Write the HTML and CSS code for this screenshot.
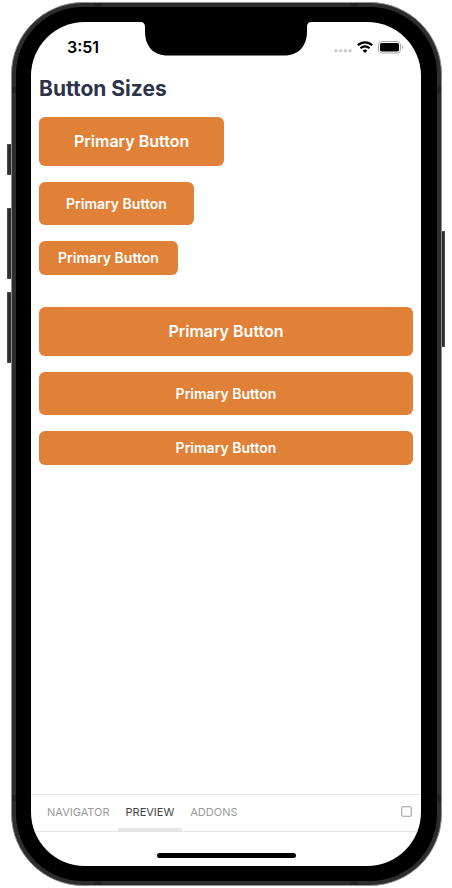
FILE: index.html
```html
<!DOCTYPE html>
<html lang="en">
<head>
  <meta charset="utf-8">
  <meta name="viewport" content="width=device-width, initial-scale=1">
  <title>Button Sizes</title>
  <link rel="stylesheet" href="styles.css">
</head>
<body>
  <div class="phone">
    <span class="side-key side-key-mute"></span>
    <span class="side-key side-key-up"></span>
    <span class="side-key side-key-down"></span>
    <span class="side-key side-key-power"></span>
    <div class="frame">
      <span class="band band-top-left"></span>
      <span class="band band-top-right"></span>
      <span class="band band-bottom-left"></span>
      <span class="band band-bottom-right"></span>
      <span class="band band-left-top"></span>
      <span class="band band-left-bottom"></span>
      <span class="band band-right-top"></span>
      <span class="band band-right-bottom"></span>
      <div class="bezel">
        <div class="screen">
          <header class="status-bar">
            <time class="clock">3:51</time>
            <svg class="notch" width="172" height="34" viewBox="0 0 172 34" aria-hidden="true">
              <path d="M0 0H172C168.500 0 167 1.500 167 5V9C167 24 159 33.500 144 33.500H28C13 33.500 5 24 5 9V5C5 1.500 3.500 0 0 0Z"/>
            </svg>
            <div class="indicators">
              <svg class="signal" width="18" height="12" viewBox="0 0 18 12" aria-hidden="true">
                <circle cx="2" cy="9.800" r="1.700"/><circle cx="6.700" cy="9.800" r="1.700"/><circle cx="11.400" cy="9.800" r="1.700"/><circle cx="16.100" cy="9.800" r="1.700"/>
              </svg>
              <svg class="wifi" width="16" height="12" viewBox="0 0 16 12" aria-hidden="true">
                <path class="arc" d="M.9 4.300A10.200 10.200 0 0 1 15.100 4.300M3.500 7.200A6.400 6.400 0 0 1 12.500 7.200"/>
                <path d="M8 11.900L5.600 9.500A3.600 3.600 0 0 1 10.400 9.500Z"/>
              </svg>
              <svg class="battery" width="26" height="13" viewBox="0 0 26 13" aria-hidden="true">
                <rect class="shell" x=".5" y=".5" width="22" height="11.500" rx="3.300"/>
                <rect x="2" y="2" width="19" height="8.500" rx="1.700"/>
                <path class="cap" d="M24 4.300C25.700 5 25.700 7.500 24 8.200Z"/>
              </svg>
            </div>
          </header>
          <main class="content">
            <h1 class="title">Button Sizes</h1>
            <div class="stack">
              <button class="button button-large" type="button">Primary Button</button>
              <button class="button button-medium" type="button">Primary Button</button>
              <button class="button button-small" type="button">Primary Button</button>
            </div>
            <div class="stack stack-block">
              <button class="button button-large" type="button">Primary Button</button>
              <button class="button button-medium" type="button">Primary Button</button>
              <button class="button button-small" type="button">Primary Button</button>
            </div>
          </main>
          <nav class="tabs" aria-label="Storybook">
            <button class="tab" type="button">NAVIGATOR</button>
            <button class="tab tab-active" type="button" aria-current="page">PREVIEW</button>
            <button class="tab" type="button">ADDONS</button>
            <button class="toggle" type="button" aria-label="Toggle panel">
              <svg width="11" height="11" viewBox="0 0 11 11" aria-hidden="true"><rect x=".75" y=".75" width="9.500" height="9.500" rx=".6"/></svg>
            </button>
          </nav>
          <footer class="home"><span class="home-bar"></span></footer>
        </div>
      </div>
    </div>
  </div>
</body>
</html>
```

FILE: styles.css
```css
* {
  box-sizing: border-box;
}

body {
  margin: 0;
  min-height: 100vh;
  display: flex;
  padding: 2px 10px 2px 11px;
  background: #fff;
  font-family: Inter, "Liberation Sans", sans-serif;
}

button {
  margin: 0;
  border: 0;
  font-family: inherit;
  cursor: pointer;
}

svg {
  display: block;
}

.phone {
  position: relative;
  flex: 1;
  display: flex;
}

.frame {
  position: relative;
  flex: 1;
  display: flex;
  padding: 4px;
  border: 1px solid #8e8e8e;
  border-radius: 72px;
  background: #2d2d2d;
}

.bezel {
  position: relative;
  flex: 1;
  display: flex;
  padding: 15px 16px 15px 15px;
  border-radius: 67px;
  background: #000;
}

.screen {
  flex: 1;
  display: flex;
  flex-direction: column;
  overflow: hidden;
  border-radius: 54px;
  background: #fff;
}

.side-key {
  position: absolute;
  left: -4px;
  width: 5px;
  background: #2d2d2d;
  border: 1px solid #4a4a4a;
  border-right: 0;
  border-radius: 1px 0 0 1px;
}

.side-key-mute {
  top: 142px;
  height: 31px;
}

.side-key-up {
  top: 206px;
  height: 71px;
}

.side-key-down {
  top: 290px;
  height: 71px;
}

.side-key-power {
  left: auto;
  right: -3px;
  top: 229px;
  height: 116px;
  border-right: 1px solid #4a4a4a;
  border-left: 0;
  border-radius: 0 1px 1px 0;
}

.band {
  position: absolute;
  width: 7px;
  height: 4px;
  background: #222;
}

.band-top-left,
.band-bottom-left {
  left: 83px;
}

.band-top-right,
.band-bottom-right {
  right: 83px;
}

.band-top-left,
.band-top-right {
  top: 0;
}

.band-bottom-left,
.band-bottom-right {
  bottom: 0;
}

.band-left-top,
.band-left-bottom,
.band-right-top,
.band-right-bottom {
  width: 4px;
  height: 7px;
}

.band-left-top,
.band-left-bottom {
  left: 0;
}

.band-right-top,
.band-right-bottom {
  right: 0;
}

.band-left-top,
.band-right-top {
  top: 83px;
}

.band-left-bottom,
.band-right-bottom {
  bottom: 83px;
}

.status-bar {
  position: relative;
  display: flex;
  align-items: center;
  justify-content: space-between;
  height: 47px;
  padding: 3px 17px 0 36px;
}

.clock {
  color: #000;
  font-size: 16px;
  font-weight: 600;
  line-height: 20px;
}

.notch {
  position: absolute;
  top: 0;
  left: 50%;
  margin-left: -86px;
}

.indicators {
  display: flex;
  align-items: center;
  gap: 5px;
}

.signal {
  fill: #ccc;
}

.wifi .arc {
  fill: none;
  stroke: #000;
  stroke-width: 2.2;
}

.battery .shell {
  fill: none;
  stroke: #a6a6a6;
}

.battery .cap {
  fill: #a6a6a6;
}

.content {
  flex: 1;
  padding: 8px;
}

.title {
  margin: 0 0 16px;
  color: #2d3448;
  font-size: 21px;
  font-weight: 700;
  line-height: 24px;
}

.stack {
  display: flex;
  flex-direction: column;
  align-items: flex-start;
  gap: 16px;
}

.stack-block {
  align-items: stretch;
  margin-top: 32px;
}

.button {
  border-radius: 6px;
  background: #e18137;
  color: #fff;
  font-size: 14px;
  font-weight: 600;
  line-height: 18px;
}

.button-large {
  padding: 15px 35px 16px;
  font-size: 16px;
}

.button-medium {
  padding: 13px 27px 12px;
}

.button-small {
  padding: 8px 19px;
}

.tabs {
  display: flex;
  height: 38px;
  padding: 0 8px;
  border-top: 1px solid #e6e6e6;
  border-bottom: 1px solid #e6e6e6;
}

.tab {
  padding: 0 8px;
  border-bottom: 3px solid transparent;
  background: none;
  color: #999;
  font-size: 11px;
  font-weight: 400;
}

.tab-active {
  border-bottom-color: #e6e6e6;
  color: #444;
}

.toggle {
  margin-left: auto;
  padding: 0 1px 3px;
  background: none;
}

.toggle rect {
  fill: none;
  stroke: #999;
}

.home {
  display: flex;
  justify-content: center;
  height: 34px;
  padding-top: 21px;
}

.home-bar {
  width: 139px;
  height: 5px;
  border-radius: 3px;
  background: #000;
}
```
